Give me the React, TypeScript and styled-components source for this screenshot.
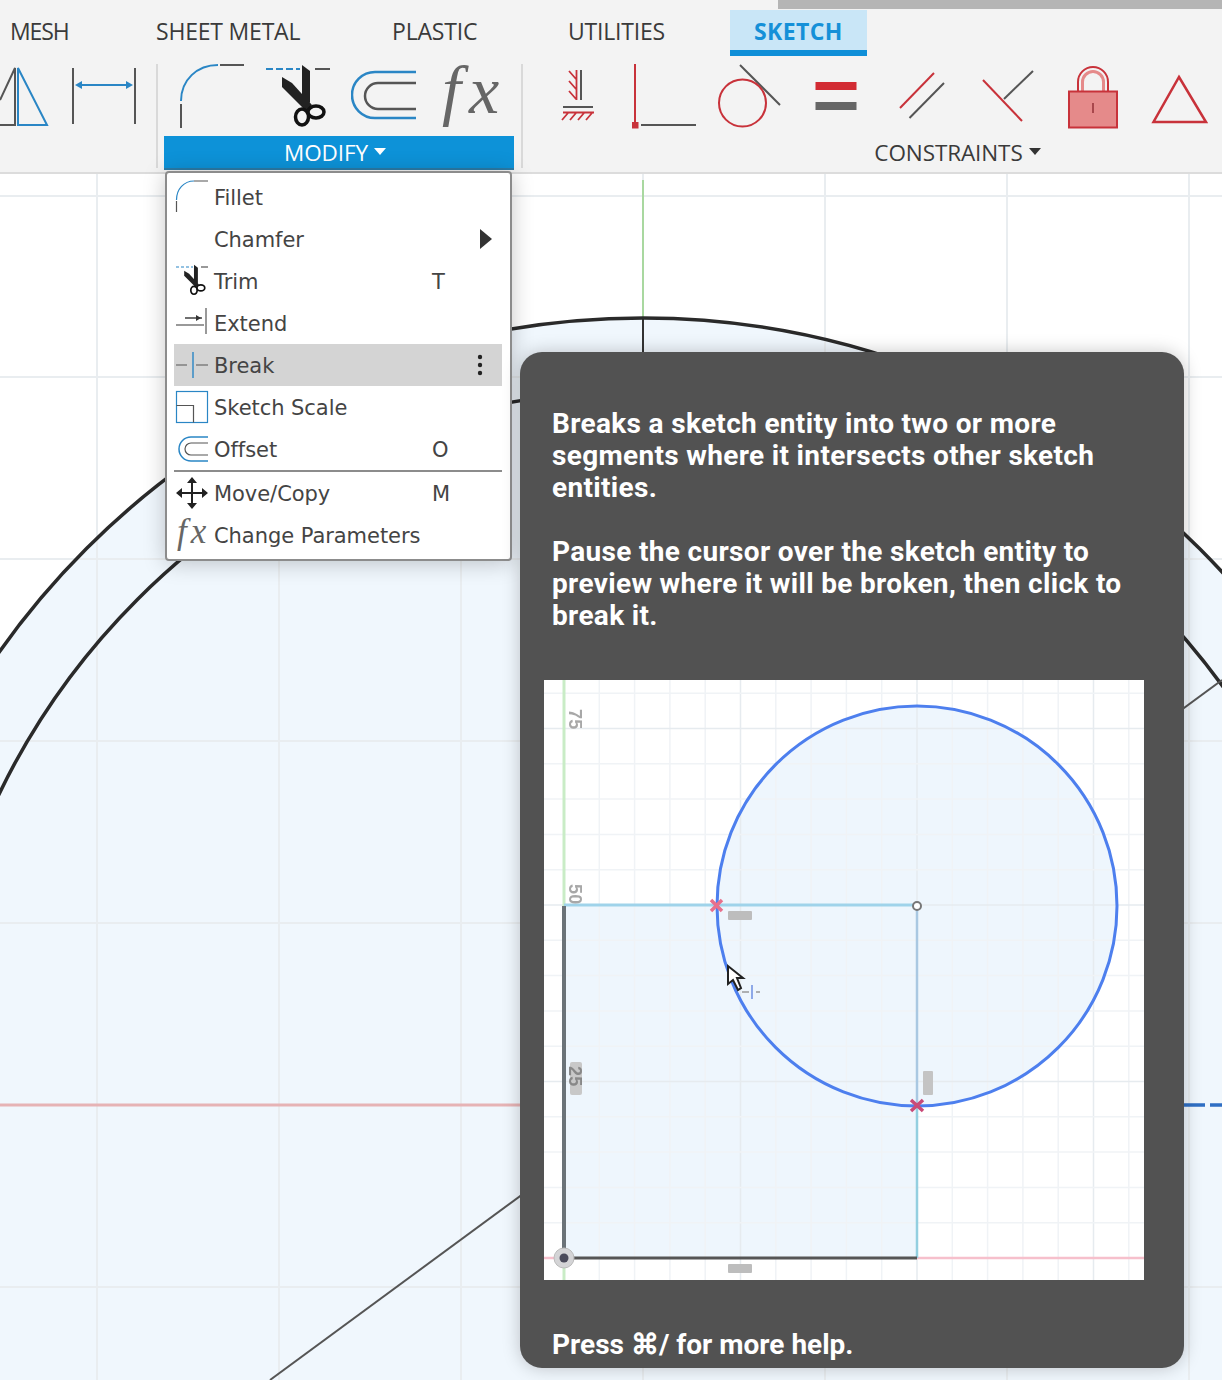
import React from 'react';
import styled, { createGlobalStyle } from 'styled-components';

const BLUE = '#2a86c5';
const DARK = '#555';
const RED = '#c8323a';

const GlobalStyle = createGlobalStyle`
  html, body {
    margin: 0;
    width: 1222px;
    height: 1380px;
    overflow: hidden;
    background: #fff;
    font-family: "Open Sans", "Liberation Sans", sans-serif;
  }
`;

const Page = styled.div`
  position: relative;
  width: 1222px;
  height: 1380px;
  overflow: hidden;
`;

const Ribbon = styled.header`
  height: 172px;
  background: #f3f3f3;
  border-bottom: 2px solid #dcdcdc;
  box-sizing: content-box;
`;

const ChromeStrip = styled.div`
  height: 10px;
  padding-left: 778px;
`;

const ChromeBar = styled.div`
  height: 9px;
  background: #b5b5b5;
`;

const TabRow = styled.nav`
  display: flex;
  height: 46px;
  padding-left: 10px;
`;

const Tab = styled.div<{ $active?: boolean; $width: number; $tracking?: number }>`
  flex: none;
  box-sizing: border-box;
  width: ${({ $width }) => $width}px;
  height: 46px;
  line-height: 42px;
  font-size: 23px;
  letter-spacing: ${({ $tracking }) => $tracking ?? -0.2}px;
  white-space: nowrap;
  color: #3a3a3a;
  ${({ $active }) =>
    $active &&
    `
    padding-left: 24px;
    background: #c9e6f7;
    color: #1590d8;
    font-weight: 700;
    letter-spacing: 0.4px;
    border-bottom: 6px solid #0f8fd8;
  `}
`;

const Panels = styled.div`
  display: flex;
  height: 116px;
`;

const Panel = styled.section<{ $width: number; $gapLeft?: number }>`
  flex: none;
  box-sizing: border-box;
  width: ${({ $width }) => $width}px;
  margin-left: ${({ $gapLeft }) => $gapLeft ?? 0}px;
  padding-top: 4px;
`;

const PanelDivider = styled.div<{ $gapLeft?: number }>`
  flex: none;
  width: 2px;
  margin: 8px 0 4px ${({ $gapLeft }) => $gapLeft ?? 0}px;
  background: #d9d9d9;
`;

const ToolRow = styled.div<{ $inset?: number; $gap?: number }>`
  display: flex;
  height: 72px;
  padding-left: ${({ $inset }) => $inset ?? 0}px;
  gap: ${({ $gap }) => $gap ?? 0}px;
  svg {
    display: block;
    flex: none;
  }
`;

const FxTool = styled.span`
  flex: none;
  box-sizing: border-box;
  width: 73px;
  height: 72px;
  padding-left: 5px;
  font-family: "Liberation Serif", serif;
  font-style: italic;
  font-size: 68px;
  line-height: 60px;
  letter-spacing: 8px;
  color: #666;
  white-space: nowrap;
`;

const PanelLabel = styled.div<{ $active?: boolean; $inset?: number; $insetRight?: number }>`
  display: flex;
  align-items: center;
  justify-content: center;
  gap: 6px;
  box-sizing: border-box;
  height: 34px;
  margin-top: 4px;
  padding-left: ${({ $inset }) => $inset ?? 0}px;
  padding-right: ${({ $insetRight }) => $insetRight ?? 0}px;
  font-size: 22.5px;
  letter-spacing: -0.1px;
  color: ${({ $active }) => ($active ? '#fff' : '#3a3a3a')};
  background: ${({ $active }) => ($active ? '#0d92d8' : 'transparent')};
  border-bottom: 2px solid ${({ $active }) => ($active ? '#2b7ca8' : 'transparent')};
`;

const Caret = styled.span<{ $light?: boolean }>`
  width: 0;
  height: 0;
  border-left: 6px solid transparent;
  border-right: 6px solid transparent;
  border-top: 7px solid ${({ $light }) => ($light ? '#fff' : '#333')};
  margin-top: -2px;
`;

const Viewport = styled.main`
  height: 1206px;
  svg {
    display: block;
  }
`;

const Menu = styled.div`
  position: absolute;
  left: 165px;
  top: 171px;
  box-sizing: border-box;
  width: 347px;
  padding: 3px 8px 3px 7px;
  background: #fff;
  border: 2px solid #8c8c8c;
  border-radius: 4px;
  box-shadow: 0 2px 22px rgba(0, 0, 0, 0.22);
`;

const MenuRow = styled.div<{ $hover?: boolean }>`
  display: flex;
  align-items: center;
  gap: 6px;
  height: 42px;
  padding-left: 2px;
  background: ${({ $hover }) => ($hover ? '#d4d4d4' : 'transparent')};
`;

const MenuIconSlot = styled.span`
  flex: none;
  width: 32px;
  height: 34px;
  svg {
    display: block;
    overflow: visible;
  }
`;

const MenuLabel = styled.span`
  flex: 0 0 212px;
  margin-top: 2px;
  font-family: "DejaVu Sans", sans-serif;
  font-size: 21px;
  letter-spacing: -0.05px;
  color: #444;
  white-space: nowrap;
`;

const MenuKey = styled.span`
  flex: 1;
  margin-top: 2px;
  font-family: "DejaVu Sans", sans-serif;
  font-size: 21px;
  color: #444;
`;

const SubArrow = styled.span`
  flex: none;
  margin-right: 10px;
  border-top: 10px solid transparent;
  border-bottom: 10px solid transparent;
  border-left: 12px solid #333;
`;

const TrailingDots = styled.svg`
  flex: none;
  margin-right: 19px;
`;

const MenuDivider = styled.div`
  height: 2px;
  background: #8c8c8c;
`;

const Tooltip = styled.aside`
  position: absolute;
  left: 520px;
  top: 352px;
  box-sizing: border-box;
  width: 664px;
  height: 1016px;
  padding: 56px 32px 0;
  background: #525252;
  border-radius: 22px;
  box-shadow: 0 0 18px rgba(0, 0, 0, 0.22);
  color: #fff;
  font-family: Roboto, "Liberation Sans", sans-serif;
  font-weight: 700;
  font-size: 28px;
  letter-spacing: 0.33px;
  line-height: 32px;
`;

const TooltipText = styled.p<{ $spacing: number }>`
  margin: 0 0 ${({ $spacing }) => $spacing}px;
`;

const Preview = styled.div`
  width: 600px;
  height: 600px;
  margin-left: -8px;
  background: #fff;
  filter: blur(0.5px);
  svg {
    display: block;
  }
`;

const TooltipFooter = styled.p`
  margin: 49px 0 0;
  letter-spacing: 0;
`;

const ToolIcon: React.FC<{ from: number; to: number; children?: React.ReactNode }> = ({ from, to, children }) => (
  <svg width={to - from} height={72} viewBox={`${from} 60 ${to - from} 72`} fill="none">
    {children}
  </svg>
);

const Scissors = () => (
  <g>
    <path d="M302 65 L310 71 L310 102 L306 108 L302 100 Z" fill="#222" />
    <path d="M282 77 L292 83 L312 105 L306 111 L282 87 Z" fill="#222" />
    <ellipse cx="302" cy="117" rx="6.5" ry="8" stroke="#111" strokeWidth="3.5" />
    <ellipse cx="316" cy="112" rx="8" ry="6" stroke="#111" strokeWidth="3.5" />
  </g>
);

const FilletIcon = () => (
  <svg width="32" height="34" viewBox="0 0 32 34" fill="none">
    <path d="M0.5 20 C0.5 9 8 1 18 1" stroke={BLUE} strokeWidth="1.2" />
    <path d="M18 1 H32 M0.5 21 V32" stroke={DARK} strokeWidth="1.2" />
  </svg>
);

const TrimIcon = () => (
  <svg width="32" height="34" viewBox="0 0 32 34" fill="none">
    <path d="M0 3 H17" stroke={BLUE} strokeWidth="1.2" strokeDasharray="3 2" />
    <path d="M25 3 H32" stroke={DARK} strokeWidth="1.2" />
    <g transform="translate(-130 -31) scale(0.49)">
      <Scissors />
    </g>
  </svg>
);

const ExtendIcon = () => (
  <svg width="32" height="34" viewBox="0 0 32 34" fill="none">
    <path d="M9 12 H26" stroke="#333" strokeWidth="1.4" />
    <path d="M25 12 L20 9 V15 Z" fill="#333" />
    <path d="M30 2 V28" stroke={DARK} strokeWidth="1.2" />
    <path d="M0 19 H28" stroke={DARK} strokeWidth="1.2" />
  </svg>
);

const BreakIcon = () => (
  <svg width="32" height="34" viewBox="0 0 32 34" fill="none">
    <path d="M0 17 H11 M20 17 H32" stroke={DARK} strokeWidth="1.2" />
    <path d="M17 4 V30" stroke={BLUE} strokeWidth="1.4" />
  </svg>
);

const ScaleIcon = () => (
  <svg width="32" height="34" viewBox="0 0 32 34" fill="none">
    <rect x="0.5" y="1.5" width="31" height="31" stroke={BLUE} strokeWidth="1.2" />
    <path d="M0.5 15.5 H17.5 V32.5" stroke={DARK} strokeWidth="1.2" />
  </svg>
);

const MenuOffsetIcon = () => (
  <svg width="32" height="34" viewBox="0 0 32 34" fill="none">
    <path d="M32 5 H15 A12 12 0 0 0 15 29 H32" stroke={BLUE} strokeWidth="1.5" />
    <path d="M32 11 H15 A6 6 0 0 0 15 23 H32" stroke={DARK} strokeWidth="1.2" />
  </svg>
);

const MoveIcon = () => (
  <svg width="32" height="34" viewBox="0 0 32 34" fill="none">
    <path d="M16 4 V30 M3 17 H29" stroke="#222" strokeWidth="2" />
    <path d="M16 1 L21 7 H11 Z M16 33 L11 27 H21 Z M0 17 L6 12 V22 Z M32 17 L26 22 V12 Z" fill="#222" />
  </svg>
);

const MenuFxIcon = () => (
  <svg width="32" height="34" viewBox="0 0 32 34" fill="none">
    <text x="1" y="25" fontFamily="'Liberation Serif', serif" fontStyle="italic" fontSize="35" letterSpacing="4" fill="#666">
      fx
    </text>
  </svg>
);

const DotsIcon = () => (
  <TrailingDots width="6" height="24" viewBox="0 0 6 24">
    <circle cx="3" cy="4" r="2.2" fill="#222" />
    <circle cx="3" cy="12" r="2.2" fill="#222" />
    <circle cx="3" cy="20" r="2.2" fill="#222" />
  </TrailingDots>
);

const menuItems = [
  { label: 'Fillet', icon: <FilletIcon /> },
  { label: 'Chamfer', trailing: <SubArrow /> },
  { label: 'Trim', icon: <TrimIcon />, shortcut: 'T' },
  { label: 'Extend', icon: <ExtendIcon /> },
  { label: 'Break', icon: <BreakIcon />, hover: true, trailing: <DotsIcon /> },
  { label: 'Sketch Scale', icon: <ScaleIcon /> },
  { label: 'Offset', icon: <MenuOffsetIcon />, shortcut: 'O' },
  { divider: true, label: 'divider' },
  { label: 'Move/Copy', icon: <MoveIcon />, shortcut: 'M' },
  { label: 'Change Parameters', icon: <MenuFxIcon /> },
];

const Sketch = () => {
  const vertical = [97, 279, 461, 643, 825, 1007, 1189];
  const horizontal = [196, 377, 559, 741, 923, 1287];
  return (
    <svg width="1222" height="1206" viewBox="0 174 1222 1206" fill="none">
      <circle cx="643" cy="1105" r="787" fill="#f0f7fd" />
      {vertical.map((x) => (
        <path key={x} d={`M${x} 174 V1380`} stroke="#e9edf0" strokeWidth="2" />
      ))}
      {horizontal.map((y) => (
        <path key={y} d={`M0 ${y} H1222`} stroke="#e9edf0" strokeWidth="2" />
      ))}
      <path d="M0 1105 H525" stroke="#e6b3b5" strokeWidth="3" />
      <path d="M1184 1105 H1205 M1210 1105 H1222" stroke="#2f6fc4" strokeWidth="3.5" />
      <path d="M643 180 V318" stroke="#a9d8a0" strokeWidth="2" />
      <path d="M643 318 V360" stroke="#333" strokeWidth="2" />
      <circle cx="643" cy="1105" r="787" stroke="#2a2a2a" strokeWidth="3.5" />
      <circle cx="643" cy="1105" r="715" stroke="#2a2a2a" strokeWidth="3.5" />
      <path d="M270 1380 L1222 680" stroke="#555" strokeWidth="2" />
    </svg>
  );
};

const BreakPreview = () => {
  const step = 35.3;
  const columns = Array.from({ length: 17 }, (_, i) => 20 + i * step);
  const rows = Array.from({ length: 17 }, (_, i) => 578 - i * step);
  return (
    <svg width="600" height="600" viewBox="0 0 600 600" fill="none">
      <rect x="20" y="226" width="353" height="352" fill="#eef6fd" />
      <circle cx="373" cy="226" r="200" fill="#eef6fd" />
      {columns.map((x, i) => (
        <path key={x} d={`M${x} 0 V600`} stroke={i % 5 === 0 ? '#e6ebef' : '#f0f3f6'} strokeWidth="1.5" />
      ))}
      {rows.map((y, i) => (
        <path key={y} d={`M0 ${y} H600`} stroke={i % 5 === 0 ? '#e6ebef' : '#f0f3f6'} strokeWidth="1.5" />
      ))}
      <path d="M20 0 V226" stroke="#c9ecc6" strokeWidth="3" />
      <path d="M20 578 V600" stroke="#c9ecc6" strokeWidth="3" />
      <path d="M0 578 H20 M373 578 H600" stroke="#f6c0cc" strokeWidth="2.5" />
      <path d="M20 225 H373" stroke="#9fd3ea" strokeWidth="3" />
      <path d="M373 226 V425" stroke="#a9c8e2" strokeWidth="2.5" />
      <path d="M373 425 V578" stroke="#93cfe0" strokeWidth="2.5" />
      <path d="M20 226 V578" stroke="#6b7378" strokeWidth="4" />
      <path d="M20 578 H373" stroke="#555" strokeWidth="3" />
      <circle cx="373" cy="226" r="200" stroke="#4d7fee" strokeWidth="3" />
      <circle cx="373" cy="226" r="4" fill="#fff" stroke="#777" strokeWidth="2" />
      <path d="M167 220 L178 231 M178 220 L167 231" stroke="#e8708c" strokeWidth="3.5" />
      <path d="M367 420 L379 431 M379 420 L367 431" stroke="#c94a78" strokeWidth="3.5" />
      <rect x="184" y="231" width="24" height="9" rx="1" fill="#bdbdbd" />
      <rect x="184" y="584" width="24" height="9" rx="1" fill="#bdbdbd" />
      <rect x="379" y="391" width="10" height="24" rx="1" fill="#c4c4c4" />
      <rect x="26" y="382" width="12" height="33" rx="2" fill="#c8c8c8" />
      <g fontFamily="'Liberation Sans', sans-serif" fontSize="18" fill="#a8a8a8">
        <text transform="translate(25 29) rotate(90)">75</text>
        <text transform="translate(25 204) rotate(90)">50</text>
        <text transform="translate(25 386) rotate(90)" fill="#888">25</text>
      </g>
      <circle cx="20" cy="578" r="10" fill="#d4d4d6" stroke="#bbb" strokeWidth="1" />
      <circle cx="20" cy="578" r="4.5" fill="#4a4a5a" />
      <path d="M184 286 V304 L189 300 L194 310 L197 308 L193 298 L199 298 Z" fill="#fff" stroke="#222" strokeWidth="2" />
      <path d="M198 312 H205 M212 312 H216" stroke="#999" strokeWidth="1.5" />
      <path d="M208 305 V319" stroke="#8ea9e8" strokeWidth="2" />
    </svg>
  );
};

const App: React.FC = () => (
  <Page>
    <GlobalStyle />
    <Ribbon>
      <ChromeStrip>
        <ChromeBar />
      </ChromeStrip>
      <TabRow>
        <Tab $width={146} $tracking={-1.1}>MESH</Tab>
        <Tab $width={236}>SHEET METAL</Tab>
        <Tab $width={176}>PLASTIC</Tab>
        <Tab $width={162}>UTILITIES</Tab>
        <Tab $active $width={137}>SKETCH</Tab>
      </TabRow>
      <Panels>
        <Panel $width={156}>
          <ToolRow>
            <ToolIcon from={0} to={60}>
              <path d="M0 125 H15 V68 L0 100" stroke={DARK} strokeWidth="2" />
              <path d="M18 68 V125 H47 Z" stroke={BLUE} strokeWidth="2" />
            </ToolIcon>
            <ToolIcon from={60} to={156}>
              <path d="M73 68 V124 M135 68 V124" stroke={DARK} strokeWidth="2" />
              <path d="M78 85 H130" stroke={BLUE} strokeWidth="2" />
              <path d="M75 85 L82 81 V89 Z M133 85 L126 81 V89 Z" fill={BLUE} />
            </ToolIcon>
          </ToolRow>
        </Panel>
        <PanelDivider />
        <Panel $width={350} $gapLeft={6}>
          <ToolRow $inset={14} $gap={21}>
            <ToolIcon from={178} to={244}>
              <path d="M181 101 C181 80 197 65 218 65" stroke={BLUE} strokeWidth="2" />
              <path d="M220 65 H244 M181 104 V128" stroke={DARK} strokeWidth="2" />
            </ToolIcon>
            <ToolIcon from={265} to={330}>
              <path d="M266 69 H300" stroke={BLUE} strokeWidth="2" strokeDasharray="7 3" />
              <path d="M315 69 H330" stroke={DARK} strokeWidth="2" />
              <Scissors />
            </ToolIcon>
            <ToolIcon from={351} to={416}>
              <path d="M416 72 H375 A23 23 0 0 0 375 118 H416" stroke={BLUE} strokeWidth="2.5" />
              <path d="M416 83 H378 A13 13 0 0 0 378 109 H416" stroke={DARK} strokeWidth="2.5" />
            </ToolIcon>
            <FxTool>fx</FxTool>
          </ToolRow>
          <PanelLabel $active $insetRight={8}>
            MODIFY
            <Caret $light />
          </PanelLabel>
        </Panel>
        <PanelDivider $gapLeft={7} />
        <Panel $width={699}>
          <ToolRow $inset={31}>
            <ToolIcon from={554} to={614}>
              <path d="M581 70 V100" stroke={DARK} strokeWidth="2" />
              <path d="M576.5 70 V100 M569 71 L576 79 M569 81 L576 89 M569 91 L576 99" stroke={RED} strokeWidth="1.8" />
              <path d="M563 107 H593" stroke={DARK} strokeWidth="2" />
              <path d="M563 112.5 H594 M568 113 L562 120 M576 113 L570 120 M584 113 L578 120 M592 113 L586 120" stroke={RED} strokeWidth="1.8" />
            </ToolIcon>
            <ToolIcon from={614} to={707}>
              <path d="M635 64 V122" stroke={RED} strokeWidth="2" />
              <rect x="632" y="122" width="6.5" height="6.5" fill={RED} />
              <path d="M641 125 H696" stroke={DARK} strokeWidth="2" />
            </ToolIcon>
            <ToolIcon from={707} to={797}>
              <path d="M740 65 L780 105" stroke={DARK} strokeWidth="2" />
              <circle cx="742.5" cy="103" r="23.5" stroke={RED} strokeWidth="2" />
            </ToolIcon>
            <ToolIcon from={797} to={878}>
              <rect x="815.5" y="82" width="41" height="8" fill="#d22b33" />
              <rect x="815.5" y="102" width="41" height="8" fill="#666" />
            </ToolIcon>
            <ToolIcon from={878} to={964}>
              <path d="M934 73 L900 108" stroke={RED} strokeWidth="2" />
              <path d="M944 83 L909.5 118" stroke={DARK} strokeWidth="2" />
            </ToolIcon>
            <ToolIcon from={964} to={1051}>
              <path d="M1004 99 L1033 71" stroke={DARK} strokeWidth="2" />
              <path d="M983 80 L1022 121" stroke={RED} strokeWidth="2" />
            </ToolIcon>
            <ToolIcon from={1051} to={1135}>
              <path d="M1078 91 V82 A15 15 0 0 1 1108 82 V91" stroke={RED} strokeWidth="2" />
              <path d="M1082.5 91 V82 A10.5 10.5 0 0 1 1103.5 82 V91" stroke="#e58a8a" strokeWidth="3" />
              <rect x="1069" y="91.5" width="48" height="36" fill="#e58a8a" stroke={RED} strokeWidth="2" />
              <path d="M1093 103 V113" stroke="#a8474c" strokeWidth="2" />
            </ToolIcon>
            <ToolIcon from={1135} to={1222}>
              <path d="M1179 77 L1206 122 H1153.5 Z" stroke={RED} strokeWidth="2.5" />
            </ToolIcon>
          </ToolRow>
          <PanelLabel $inset={170}>
            CONSTRAINTS
            <Caret />
          </PanelLabel>
        </Panel>
      </Panels>
    </Ribbon>
    <Viewport>
      <Sketch />
    </Viewport>
    <Menu>
      {menuItems.map((item) =>
        item.divider ? (
          <MenuDivider key={item.label} />
        ) : (
          <MenuRow key={item.label} $hover={item.hover}>
            <MenuIconSlot>{item.icon}</MenuIconSlot>
            <MenuLabel>{item.label}</MenuLabel>
            <MenuKey>{item.shortcut}</MenuKey>
            {item.trailing}
          </MenuRow>
        ),
      )}
    </Menu>
    <Tooltip>
      <TooltipText $spacing={32}>Breaks a sketch entity into two or more segments where it intersects other sketch entities.</TooltipText>
      <TooltipText $spacing={48}>Pause the cursor over the sketch entity to preview where it will be broken, then click to break it.</TooltipText>
      <Preview>
        <BreakPreview />
      </Preview>
      <TooltipFooter>Press ⌘/ for more help.</TooltipFooter>
    </Tooltip>
  </Page>
);

export default App;
